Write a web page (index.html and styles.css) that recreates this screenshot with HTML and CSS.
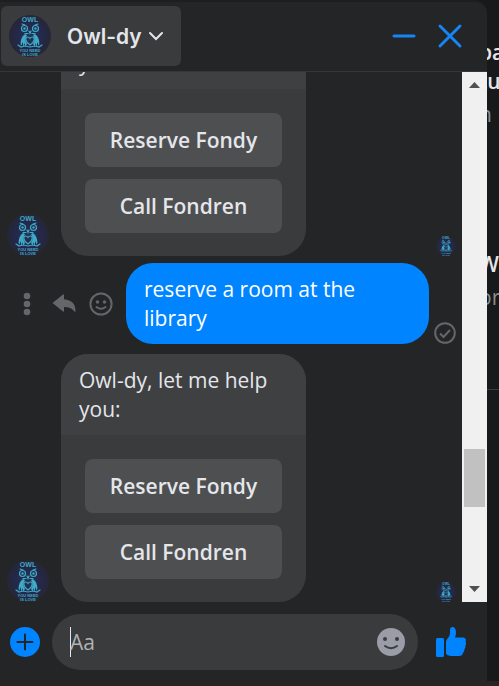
FILE: index.html
```html
<!DOCTYPE html>
<html lang="en">
<head>
<meta charset="utf-8">
<meta name="viewport" content="width=device-width, initial-scale=1">
<title>Owl-dy</title>
<link rel="stylesheet" href="styles.css">
</head>
<body>
<svg class="defs" aria-hidden="true">
  <defs>
    <radialGradient id="glow"><stop offset="0" stop-color="#203554"/><stop offset=".6" stop-color="#24284a"/><stop offset="1" stop-color="#262636"/></radialGradient>
    <symbol id="owl" viewBox="0 0 42 42">
      <circle cx="21" cy="21" r="21" fill="url(#glow)"/>
      <text x="21" y="7" class="owl-top">OWL</text>
      <g fill="none" stroke="#3fa9c8" stroke-width="1.2" stroke-linecap="round">
        <path d="M13 9l3 1M29 9l-3 1"/>
        <circle cx="15.500" cy="13.500" r="3"/><circle cx="26.500" cy="13.500" r="3"/>
        <path d="M20 16l1 2.500 1-2.500M16 18.500h3M23 18.500h3"/>
        <path d="M21 30c-5-3-5-8-2.500-8 1.500 0 2.500 1.500 2.500 1.500s1-1.500 2.500-1.500c2.500 0 2.500 5-2.500 8z"/>
        <path d="M9 30l3 2 4-1 5 1 5-1 4 1 3-2"/>
      </g>
      <path d="M16 19c-4 3-5 8-4 12l2-4v5l2-4v4l2-3c-2-3-2-6 0-9zM26 19c4 3 5 8 4 12l-2-4v5l-2-4v4l-2-3c2-3 2-6 0-9z" fill="#3fa9c8"/>
      <circle cx="15.500" cy="13.500" r="1.200" fill="#3fa9c8"/><circle cx="26.500" cy="13.500" r="1.200" fill="#3fa9c8"/>
      <text x="21" y="37" class="owl-base">YOU NEED</text>
      <text x="21" y="41" class="owl-base">IS LOVE</text>
    </symbol>
  </defs>
</svg>
<div class="screen">
  <main class="chat">
    <header class="chat-header">
      <button class="contact" type="button">
        <svg class="avatar"><use href="#owl"/></svg>
        <span>Owl-dy</span>
        <svg class="chevron" viewBox="0 0 16 10"><path d="M2 2l6 6 6-6"/></svg>
      </button>
      <div class="window-actions">
        <button type="button" aria-label="Minimize"><svg viewBox="0 0 26 26"><path d="M3 13h20"/></svg></button>
        <button type="button" aria-label="Close"><svg viewBox="0 0 26 26"><path d="M3 3l20 20M23 3L3 23"/></svg></button>
      </div>
    </header>

    <section class="history">
      <div class="messages">
        <div class="row">
          <svg class="avatar"><use href="#owl"/></svg>
          <article class="card">
            <p class="card-text">Owl-dy, let me help you:</p>
            <div class="card-actions">
              <button type="button">Reserve Fondy</button>
              <button type="button">Call Fondren</button>
            </div>
          </article>
          <svg class="seen"><use href="#owl"/></svg>
        </div>
        <div class="row sent">
          <div class="tools">
            <button type="button" aria-label="More"><svg viewBox="0 0 26 26"><circle cx="13" cy="5" r="3.300"/><circle cx="13" cy="13" r="3.300"/><circle cx="13" cy="21" r="3.300"/></svg></button>
            <button type="button" aria-label="Reply"><svg viewBox="0 0 26 26"><path d="M1.500 12L12 3.500q1-.6 1 .8v4C21 9 24.500 13 24.500 20q0 1.500-1 .4C21 17.500 18 16 13 16v3.700q0 1.400-1 .8z"/></svg></button>
            <button type="button" aria-label="React"><svg viewBox="0 0 26 26"><circle class="line" cx="13" cy="13" r="10.600"/><circle cx="9.500" cy="11" r="1.700"/><circle cx="16.500" cy="11" r="1.700"/><path class="line" d="M8.500 16q4.500 3.500 9 0"/></svg></button>
          </div>
          <p class="bubble">reserve a room at the library</p>
          <svg class="delivered" viewBox="0 0 22 22" role="img" aria-label="Delivered"><circle cx="11" cy="11" r="9.800"/><path d="M6 11.500l3.500 3.500L16 8"/></svg>
        </div>
        <div class="row">
          <svg class="avatar"><use href="#owl"/></svg>
          <article class="card">
            <p class="card-text">Owl-dy, let me help you:</p>
            <div class="card-actions">
              <button type="button">Reserve Fondy</button>
              <button type="button">Call Fondren</button>
            </div>
          </article>
          <svg class="seen"><use href="#owl"/></svg>
        </div>
      </div>
      <div class="scrollbar" aria-hidden="true">
        <svg viewBox="0 0 25 25"><path d="M7 16l5.500-6 5.500 6z"/></svg>
        <div class="before"></div>
        <div class="thumb"></div>
        <div class="after"></div>
        <svg viewBox="0 0 25 25"><path d="M7 9l5.500 6L18 9z"/></svg>
      </div>
    </section>

    <form class="composer">
      <button class="add" type="button" aria-label="Add"><svg viewBox="0 0 30 30"><circle cx="15" cy="15" r="15"/><path d="M7.500 15h15M15 7.500v15"/></svg></button>
      <div class="field">
        <span class="caret"></span>
        <input type="text" placeholder="Aa" aria-label="Message">
        <button class="emoji" type="button" aria-label="Emoji"><svg viewBox="0 0 28 28"><circle class="face" cx="14" cy="14" r="14"/><circle cx="8" cy="11" r="2"/><circle cx="20" cy="11" r="2"/><path d="M8 18q6 4.500 12 0"/></svg></button>
      </div>
      <button class="like" type="button" aria-label="Like"><svg viewBox="0 0 30 30"><rect x="0" y="11" width="8" height="19" rx="1.500"/><path d="M10 15q0-2 1.500-3.500C14 9 14 7 14 3.500 14 1 15 0 16.500 0 19 0 20 2.500 20 5.500q0 2.500-1 5h8c2.500 0 3.500 2 2.500 4 .8 1 .8 3-.2 4 .5 1.300 0 3-1 3.800.3 1.400-.3 2.700-1.300 3.400C26.500 27.800 25.500 29 23 29H16c-3 0-6-1-6-3z"/></svg></button>
    </form>
  </main>
  <aside class="behind">
    <div class="peek first"><b>pa</b><b>tu</b><span>n</span></div>
    <div class="peek second"><b>W</b><span>or</span></div>
  </aside>
</div>
</body>
</html>
```
FILE: styles.css
```css
* { box-sizing: border-box; }
body {
  margin: 0;
  background: #18191a;
  color: #e4e6eb;
  font: 21px/29px "Open Sans", "Noto Sans", sans-serif;
}
button { border: 0; padding: 0; background: none; color: inherit; font: inherit; cursor: pointer; }
p { margin: 0; }
svg { display: block; flex: none; }
.defs { position: absolute; width: 0; height: 0; }
.screen {
  display: grid;
  grid-template-columns: minmax(0, 1fr) 12px;
  height: 100vh;
  border-bottom: 5px solid #2b2423;
}
.chat {
  display: flex;
  flex-direction: column;
  min-height: 0;
  background: #242526;
  border-top: 2px solid #1d1e1f;
  border-radius: 0 12px 0 0;
}
.chat-header {
  display: flex;
  align-items: center;
  justify-content: space-between;
  padding: 4px 24px 5px 1px;
  border-bottom: 1px solid #36373a;
}
.contact {
  display: flex;
  align-items: center;
  height: 60px;
  padding: 0 17px 0 8px;
  border-radius: 6px;
  background: #3a3b3c;
  font-family: Inter, "Liberation Sans", sans-serif;
  font-weight: 600;
}
.contact span { margin: 0 6px 0 16px; }
.avatar { width: 42px; height: 42px; }
.owl-top, .owl-base { fill: #3fa9c8; font-family: "Liberation Sans", sans-serif; font-weight: 700; text-anchor: middle; }
.owl-top { font-size: 7px; }
.owl-base { font-size: 4px; }
.chevron { width: 16px; height: 10px; fill: none; stroke: #e4e6eb; stroke-width: 2; stroke-linecap: round; }
.window-actions { display: flex; gap: 20px; }
.window-actions svg { width: 26px; height: 26px; fill: none; stroke: #1584f4; stroke-width: 3; stroke-linecap: round; }
.history { flex: 1; display: flex; min-height: 0; }
.messages {
  flex: 1;
  display: flex;
  flex-direction: column;
  justify-content: flex-end;
  min-width: 0;
  overflow: hidden;
  padding: 0 6px 0 7px;
}
.row { display: flex; flex: none; align-items: flex-end; }
.card {
  width: 245px;
  margin-left: 12px;
  overflow: hidden;
  border-radius: 27px;
  background: #3a3b3c;
}
.card-text { padding: 12px 18px 11px; background: #3e4042; }
.card-actions { display: grid; gap: 12px; padding: 24px 24px 23px; }
.card-actions button { height: 54px; border-radius: 8px; background: #4e4f50; font-weight: 600; }
.seen { width: 20px; height: 20px; margin-left: auto; }
.sent { justify-content: flex-end; margin: 7px 0 10px; }
.tools { display: flex; align-self: center; gap: 11px; margin-right: 12px; }
.tools svg { width: 26px; height: 26px; fill: #656669; }
.tools .line { fill: none; stroke: #656669; stroke-width: 2; stroke-linecap: round; }
.bubble {
  width: 303px;
  padding: 12px 60px 11px 18px;
  border-radius: 27px;
  background: #0084ff;
  color: #fff;
}
.delivered { width: 22px; height: 22px; margin-left: 5px; fill: none; stroke: #656669; stroke-width: 2; }
.scrollbar { display: flex; flex-direction: column; width: 25px; background: #f0f0f0; }
.scrollbar svg { width: 25px; height: 25px; fill: #505050; }
.before { flex: 352; }
.after { flex: 70; }
.thumb { height: 58px; margin: 0 2px; background: #c1c1c1; }
.composer { display: flex; align-items: center; padding: 12px 21px 11px 10px; }
.add svg { width: 30px; height: 30px; fill: #0084ff; }
.add path { stroke: #242526; stroke-width: 2; stroke-linecap: round; }
.field {
  flex: 1;
  display: flex;
  align-items: center;
  min-width: 0;
  height: 56px;
  margin: 0 18px 0 12px;
  padding: 0 13px 0 18px;
  border-radius: 28px;
  background: #3a3b3c;
}
.caret { width: 1px; height: 30px; margin-right: -1px; background: #e4e6eb; }
.field input { flex: 1; min-width: 0; border: 0; padding: 0; outline: 0; background: none; color: #e4e6eb; font: inherit; }
.field input::placeholder { color: #b0b3b8; opacity: 1; }
.emoji svg { width: 28px; height: 28px; fill: #3a3b3c; }
.emoji .face { fill: #9a9da8; }
.emoji path { fill: none; stroke: #3a3b3c; stroke-width: 2; stroke-linecap: round; }
.like svg { width: 30px; height: 30px; fill: #0084ff; }
.behind { overflow: hidden; background: #18191a; }
.peek { display: flex; flex-direction: column; margin-left: -8px; }
.peek b { font-weight: 600; }
.peek span { margin-top: 4px; color: #8a8d91; }
.first { padding-top: 38px; }
.second { height: 261px; padding-top: 121px; border-bottom: 1px solid #3a3b3c; }
```
